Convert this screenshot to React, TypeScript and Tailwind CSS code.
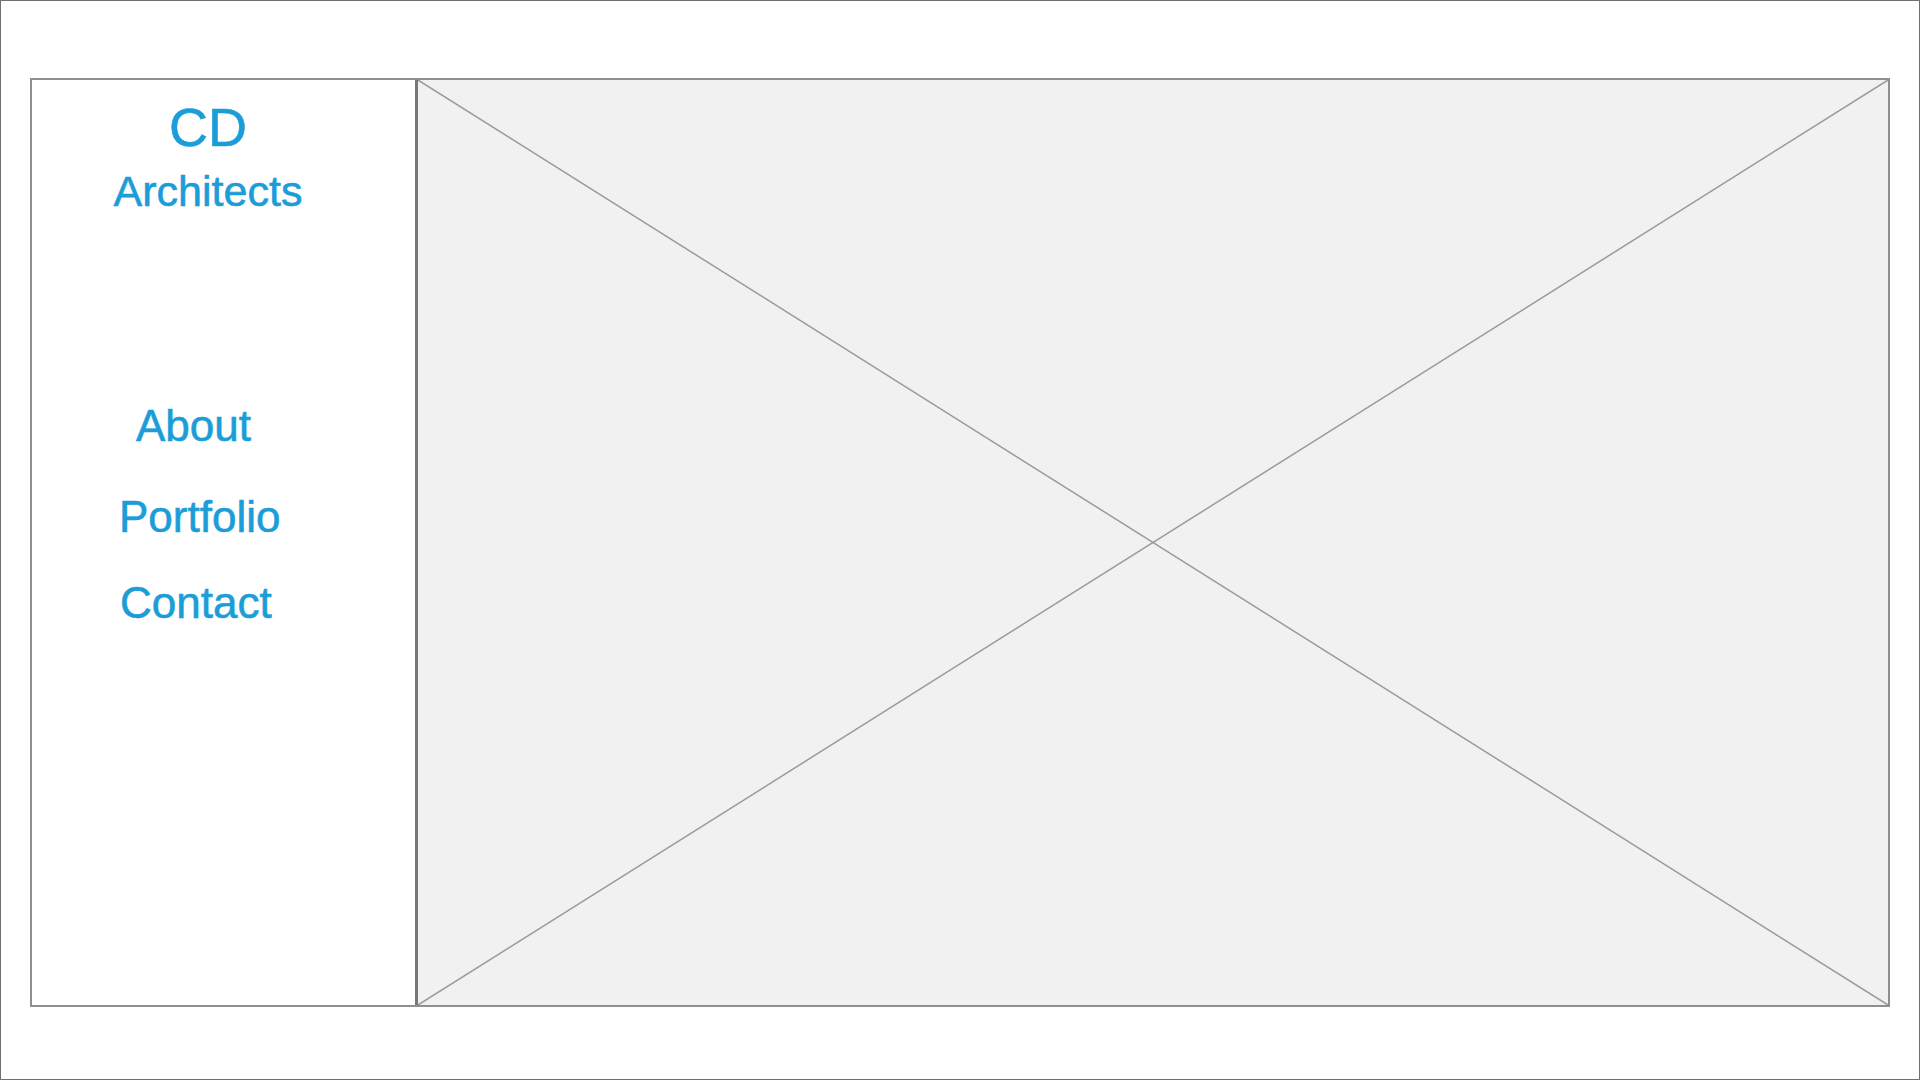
import React from "react";

export default function App() {
  return (
    <div className="w-[1920px] h-[1080px] border border-[#707070] bg-white pt-[77px] pl-[29px]">
      <div className="w-[1860px] h-[929px] border-2 border-[#8f8f8f] flex">
        <div
          className="w-[386px] shrink-0 border-r-[3px] border-[#777777] flex flex-col text-[#1b9dd8] [-webkit-text-stroke:0.6px_#1b9dd8]"
          style={{ fontFamily: '"Liberation Sans", Arial, sans-serif' }}
        >
          <div className="w-[352px] flex flex-col items-center">
            <div className="text-[54px] leading-none mt-[20px]">CD</div>
            <div className="text-[43px] leading-none mt-[16px]">Architects</div>
          </div>
          <nav className="flex flex-col items-start">
            <a className="text-[44px] leading-none mt-[191px] pl-[104px]">About</a>
            <a className="text-[44px] leading-none mt-[47px] pl-[87px]">Portfolio</a>
            <a className="text-[44px] leading-none mt-[42px] pl-[88px]">Contact</a>
          </nav>
        </div>
        <div className="flex-1 bg-[#f1f1f1] relative">
          <svg
            className="absolute inset-0 w-full h-full"
            viewBox="0 0 100 100"
            preserveAspectRatio="none"
          >
            <line x1="0" y1="0" x2="100" y2="100" stroke="#9a9a9a" strokeWidth="1.5" vectorEffect="non-scaling-stroke" />
            <line x1="100" y1="0" x2="0" y2="100" stroke="#9a9a9a" strokeWidth="1.5" vectorEffect="non-scaling-stroke" />
          </svg>
        </div>
      </div>
    </div>
  );
}
